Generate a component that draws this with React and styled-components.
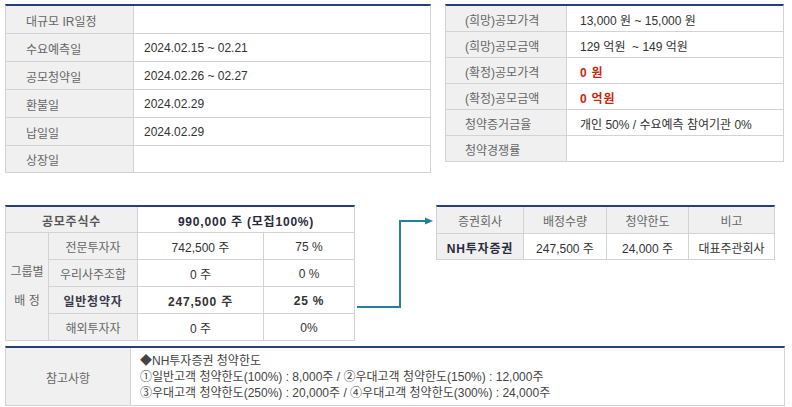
import React from 'react'
import styled, { createGlobalStyle } from 'styled-components'

const GlobalStyle = createGlobalStyle`
  body {
    margin: 0;
    background: #fff;
    font-family: 'Liberation Sans', 'Noto Sans CJK KR', sans-serif;
    font-size: 12px;
    color: #333;
  }
`

const Page = styled.div`
  padding: 4px 0 0 5px;
  display: flex;
  flex-direction: column;
  align-items: flex-start;
`

const Row = styled.div`
  display: flex;
  align-items: flex-start;
  gap: ${(p) => p.$gap || 0}px;
  margin-top: ${(p) => p.$top || 0}px;
`

const Grid = styled.div`
  display: grid;
  box-sizing: border-box;
  width: ${(p) => p.$w}px;
  grid-template-columns: ${(p) => p.$cols};
  grid-template-rows: ${(p) => p.$rows};
  gap: 1px;
  background: #d3d3d3;
  border: 1px solid #d3d3d3;
  border-top: 2px solid #273f74;
`

const Cell = styled.div`
  display: flex;
  align-items: center;
  justify-content: ${(p) => (p.$left ? 'flex-start' : 'center')};
  padding-left: ${(p) => p.$pl || 0}px;
  padding-top: 1px;
  background: ${(p) => (p.$head ? '#f0f0f0' : '#fff')};
  color: ${(p) => (p.$red ? '#c8260f' : p.$head ? '#666' : '#333')};
  font-weight: ${(p) => (p.$bold ? 700 : 400)};
  letter-spacing: ${(p) => (p.$bold ? '0.8px' : 'normal')};
  white-space: nowrap;
  grid-column: ${(p) => (p.$colSpan ? `span ${p.$colSpan}` : 'auto')};
  grid-row: ${(p) => (p.$rowSpan ? `span ${p.$rowSpan}` : 'auto')};
`

const Strong = styled.span`
  color: ${(p) => p.$color || '#333'};
`

const GroupLabel = styled(Cell)`
  flex-direction: column;
  line-height: 29px;
`

const Notes = styled(Cell)`
  flex-direction: column;
  align-items: flex-start;
  justify-content: center;
  line-height: 16px;
  color: #444;
`

const scheduleRows = [
  ['대규모 IR일정', ''],
  ['수요예측일', '2024.02.15 ~ 02.21'],
  ['공모청약일', '2024.02.26 ~ 02.27'],
  ['환불일', '2024.02.29'],
  ['납일일', '2024.02.29'],
  ['상장일', ''],
]

const priceRows = [
  ['(희망)공모가격', '13,000 원 ~ 15,000 원'],
  ['(희망)공모금액', '129 억원 \u00a0~ 149 억원'],
  ['(확정)공모가격', '0 원', true],
  ['(확정)공모금액', '0 억원', true],
  ['청약증거금율', '개인 50% / 수요예측 참여기관 0%'],
  ['청약경쟁률', ''],
]

const allotRows = [
  ['전문투자자', '742,500 주', '75 %'],
  ['우리사주조합', '0 주', '0 %'],
  ['일반청약자', '247,500 주', '25 %', true],
  ['해외투자자', '0 주', '0%'],
]

const Arrow = () => (
  <svg width="81" height="136" viewBox="0 0 81 136">
    <path d="M2 102 H45 V16 H72" fill="none" stroke="#24809b" strokeWidth="2" />
    <path d="M70 12.5 L78 16 L70 19.5 Z" fill="#24809b" />
  </svg>
)

const App = () => (
  <Page>
    <GlobalStyle />
    <Row $gap={14}>
      <Grid $w={426} $cols="127px 296px" $rows="27px 27px 27px 27px 27px 26px">
        {scheduleRows.map(([label, value]) => (
          <React.Fragment key={label}>
            <Cell $head $left $pl={20}>{label}</Cell>
            <Cell $left $pl={10}>{value}</Cell>
          </React.Fragment>
        ))}
      </Grid>
      <Grid $w={339} $cols="120px 216px" $rows="repeat(6, 25px)">
        {priceRows.map(([label, value, red]) => (
          <React.Fragment key={label}>
            <Cell $head $left $pl={19}>{label}</Cell>
            <Cell $left $pl={13} $red={red} $bold={red}>{value}</Cell>
          </React.Fragment>
        ))}
      </Grid>
    </Row>

    <Row $top={32}>
      <Grid $w={350} $cols="42px 88px 125px 90px" $rows="25px 26px 26px 26px 26px">
        <Cell $head $bold $colSpan={2}><Strong $color="#555">공모주식수</Strong></Cell>
        <Cell $bold $colSpan={2}><Strong $color="#2a2a3c">990,000 주 (모집100%)</Strong></Cell>
        <GroupLabel $head $rowSpan={4}>
          <span>그룹별</span>
          <span>배 정</span>
        </GroupLabel>
        {allotRows.map(([who, shares, pct, bold]) => (
          <React.Fragment key={who}>
            <Cell $head $bold={bold}>{bold ? <Strong $color="#3a3a4a">{who}</Strong> : who}</Cell>
            <Cell $bold={bold}>{shares}</Cell>
            <Cell $bold={bold}>{pct}</Cell>
          </React.Fragment>
        ))}
      </Grid>
      <Arrow />
      <Grid $w={339} $cols="86px 82px 81px 85px" $rows="26px 25px">
        <Cell $head>증권회사</Cell>
        <Cell $head>배정수량</Cell>
        <Cell $head>청약한도</Cell>
        <Cell $head>비고</Cell>
        <Cell $head $bold><Strong $color="#2a2a3c">NH투자증권</Strong></Cell>
        <Cell>247,500 주</Cell>
        <Cell>24,000 주</Cell>
        <Cell>대표주관회사</Cell>
      </Grid>
    </Row>

    <Row $top={5}>
      <Grid $w={780} $cols="124px 653px" $rows="57px">
        <Cell $head>참고사항</Cell>
        <Notes $pl={9}>
          <span>◆NH투자증권 청약한도</span>
          <span>①일반고객 청약한도(100%) : 8,000주 / ②우대고객 청약한도(150%) : 12,000주</span>
          <span>③우대고객 청약한도(250%) : 20,000주 / ④우대고객 청약한도(300%) : 24,000주</span>
        </Notes>
      </Grid>
    </Row>
  </Page>
)

export default App
